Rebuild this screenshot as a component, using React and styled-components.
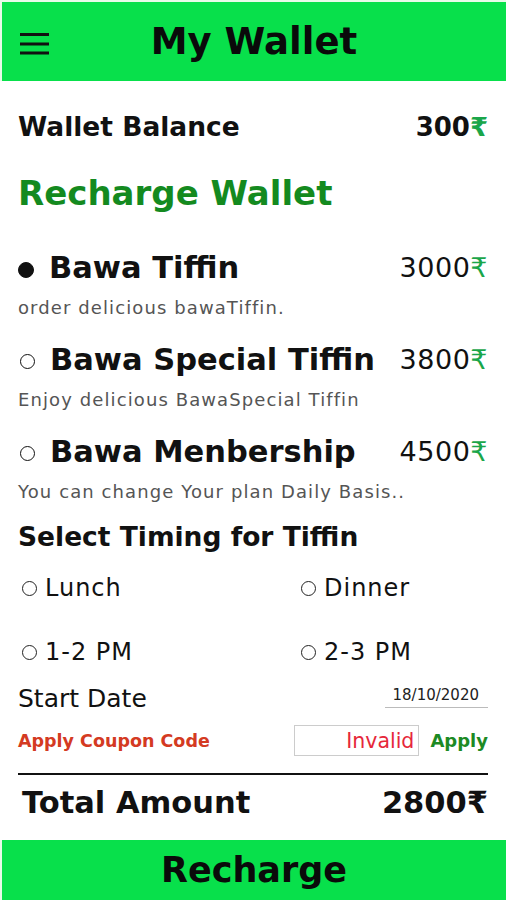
import React from 'react';
import styled, { createGlobalStyle } from 'styled-components';

const GlobalStyle = createGlobalStyle`
  body {
    margin: 0;
    background: #fff;
    font-family: "DejaVu Sans", "Noto Sans", sans-serif;
    color: #111;
  }
`;

const Page = styled.div`
  width: 506px;
  height: 900px;
  display: flex;
  flex-direction: column;
  overflow: hidden;
  background: #e9fbe9;
`;

const Header = styled.header`
  height: 79px;
  margin-top: 2px;
  margin-left: 2px;
  background: #08e04b;
  display: flex;
  align-items: center;
  justify-content: center;
  position: relative;

  .menu {
    position: absolute;
    left: 16px;
    top: 28px;
  }

  h1 {
    margin: 0;
    font-size: 37px;
    font-weight: bold;
    color: #0a0a0a;
    line-height: 44px;
  }
`;

const Body = styled.div`
  flex: 1;
  padding: 31px 18px 0;
  display: flex;
  flex-direction: column;
  background: #fff;
`;

const Row = styled.div`
  display: flex;
  justify-content: space-between;
  align-items: ${(p) => p.align || 'center'};
  margin-top: ${(p) => p.top || 0}px;
  padding-left: ${(p) => p.indent || 0}px;
`;

const Label = styled.div`
  font-size: ${(p) => p.size || 22}px;
  line-height: ${(p) => p.lh || 30}px;
  font-weight: ${(p) => (p.bold ? 'bold' : 'normal')};
  color: ${(p) => p.color || '#111'};
`;

const Rupee = styled.span`
  color: ${(p) => p.color || '#1aa64a'};
`;

const Title = styled.h2`
  margin: 31px 0 0;
  font-size: 34px;
  line-height: 40px;
  font-weight: bold;
  color: #148a1f;
`;

const Plans = styled.div`
  margin-top: 37px;
  display: flex;
  flex-direction: column;
  gap: 23px;
`;

const Plan = styled.div`
  display: flex;
  flex-direction: column;
`;

const PlanName = styled.div`
  display: flex;
  align-items: center;
  gap: 15px;
  font-size: 30.5px;
  line-height: 36px;
  font-weight: bold;
  padding-left: ${(p) => (p.filled ? 0 : 2)}px;
`;

const Dot = styled.span`
  width: ${(p) => (p.filled ? 16 : 15)}px;
  height: ${(p) => (p.filled ? 16 : 15)}px;
  border-radius: 50%;
  box-sizing: border-box;
  border: 1.5px solid #111;
  background: ${(p) => (p.filled ? '#111' : 'transparent')};
  flex: none;
  margin-top: 3px;
`;

const Price = styled.div`
  font-size: 27px;
  line-height: 36px;
  letter-spacing: 0.5px;
  color: #111;
`;

const Desc = styled.div`
  font-size: 18px;
  line-height: 22px;
  letter-spacing: 1.1px;
  color: #555;
  margin-top: 11px;
`;

const Section = styled.div`
  font-size: 26.5px;
  line-height: 30px;
  font-weight: bold;
  margin-top: 19px;
`;

const Options = styled.div`
  display: grid;
  grid-template-columns: 279px 1fr;
  row-gap: 36px;
  margin: 22px 0 0 4px;
`;

const Option = styled.label`
  display: flex;
  align-items: center;
  gap: 8px;
  font-size: 24px;
  line-height: 28px;
  letter-spacing: 1px;
  color: #111;
`;

const Ring = styled.span`
  width: 15px;
  height: 15px;
  border-radius: 50%;
  border: 1.5px solid #222;
  box-sizing: border-box;
  flex: none;
`;

const DateBox = styled.div`
  font-size: 15px;
  line-height: 18px;
  color: #222;
  padding: 0 9px 3px 8px;
  margin-bottom: 5px;
  border-bottom: 1.5px solid #bbb;
`;

const CouponRow = styled.div`
  display: flex;
  align-items: center;
  margin-top: 12px;
`;

const CouponLabel = styled.div`
  flex: 1;
  font-size: 17.5px;
  font-weight: bold;
  color: #d43a22;
`;

const CouponInput = styled.div`
  width: 125px;
  height: 31px;
  margin-right: -2px;
  border: 1px solid #ccc;
  box-sizing: border-box;
  display: flex;
  align-items: center;
  justify-content: flex-end;
  padding-right: 4px;
  font-size: 20.5px;
  color: #e6283a;
`;

const ApplyBtn = styled.div`
  margin-left: 13px;
  font-size: 18px;
  font-weight: bold;
  color: #1c8a24;
`;

const Divider = styled.hr`
  margin: 17px 0 0;
  border: none;
  border-top: 2px solid #111;
`;

const RechargeButton = styled.button`
  height: 60px;
  margin-left: 2px;
  border: none;
  padding: 0;
  background: #08e04b;
  font-family: inherit;
  font-size: 35px;
  font-weight: bold;
  color: #0a0a0a;
  display: flex;
  align-items: center;
  justify-content: center;
`;

const Menu = () => (
  <svg className="menu" width="33" height="26" viewBox="0 0 33 26">
    <g stroke="#111" strokeWidth="3">
      <line x1="2" y1="4.5" x2="31" y2="4.5" />
      <line x1="2" y1="14" x2="31" y2="14" />
      <line x1="2" y1="23" x2="31" y2="23" />
    </g>
  </svg>
);

const plans = [
  { name: 'Bawa Tiffin', price: '3000', desc: 'order delicious bawaTiffin.', selected: true },
  { name: 'Bawa Special Tiffin', price: '3800', desc: 'Enjoy delicious BawaSpecial Tiffin' },
  { name: 'Bawa Menbership', price: '4500', desc: 'You can change Your plan Daily Basis..' },
];

const App = () => (
  <Page>
    <GlobalStyle />
    <Header>
      <Menu />
      <h1>My Wallet</h1>
    </Header>
    <Body>
      <Row>
        <Label size={26.5} bold>Wallet Balance</Label>
        <Label size={26} bold>300<Rupee>₹</Rupee></Label>
      </Row>
      <Title>Recharge Wallet</Title>
      <Plans>
        {plans.map((p) => (
          <Plan key={p.name}>
            <Row>
              <PlanName filled={p.selected}>
                <Dot filled={p.selected} />
                {p.name}
              </PlanName>
              <Price>{p.price}<Rupee>₹</Rupee></Price>
            </Row>
            <Desc>{p.desc}</Desc>
          </Plan>
        ))}
      </Plans>
      <Section>Select Timing for Tiffin</Section>
      <Options>
        <Option><Ring />Lunch</Option>
        <Option><Ring />Dinner</Option>
        <Option><Ring />1-2 PM</Option>
        <Option><Ring />2-3 PM</Option>
      </Options>
      <Row align="flex-end" top={19}>
        <Label size={25} lh={28}>Start Date</Label>
        <DateBox>18/10/2020</DateBox>
      </Row>
      <CouponRow>
        <CouponLabel>Apply Coupon Code</CouponLabel>
        <CouponInput>Invalid</CouponInput>
        <ApplyBtn>Apply</ApplyBtn>
      </CouponRow>
      <Divider />
      <Row top={11} indent={4}>
        <Label size={30.5} lh={34} bold>Total Amount</Label>
        <Label size={30.5} lh={34} bold>2800<Rupee color="#111">₹</Rupee></Label>
      </Row>
    </Body>
    <RechargeButton>Recharge</RechargeButton>
  </Page>
);

export default App;
